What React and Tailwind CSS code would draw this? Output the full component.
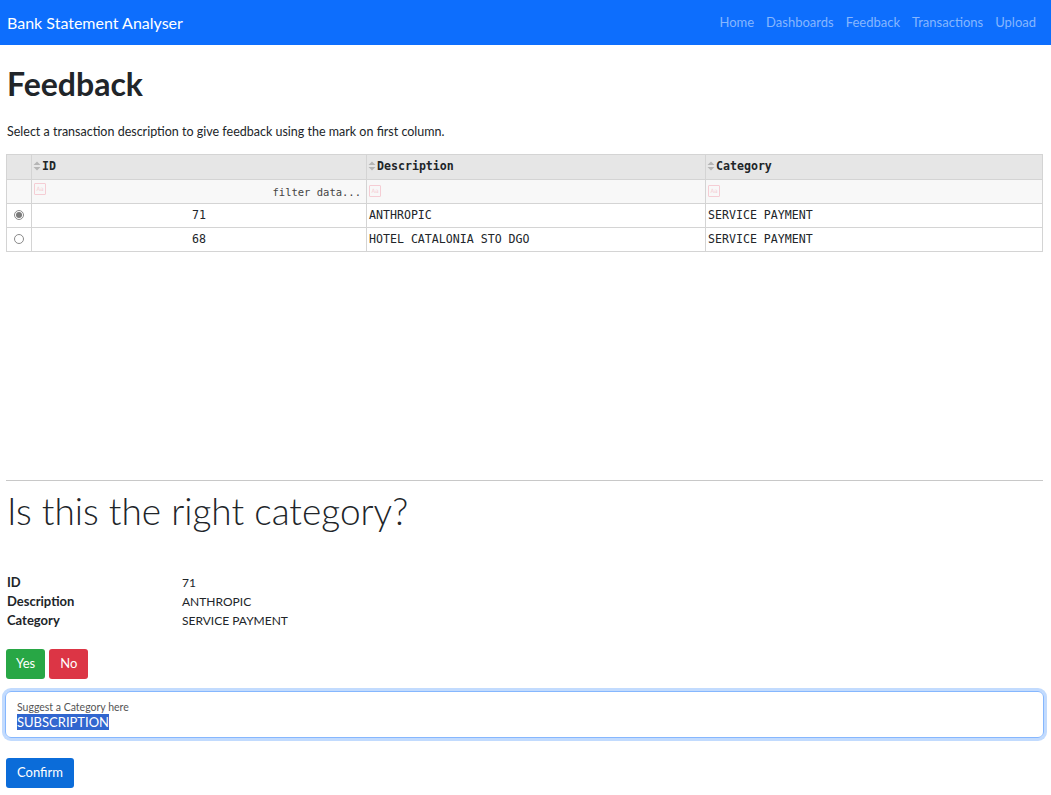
import React, { useState } from "react";

const rows = [
    { id: 71, description: "ANTHROPIC", category: "SERVICE PAYMENT" },
    { id: 68, description: "HOTEL CATALONIA STO DGO", category: "SERVICE PAYMENT" },
];

const SortIcon = () => (
    <svg width="8" height="10" viewBox="0 0 8 10" className="inline-block mr-[1px] -mt-[2px]">
        <path d="M4 0.5 L7.5 4 L0.5 4 Z" fill="#b5b5b5" />
        <path d="M4 9.5 L7.5 6 L0.5 6 Z" fill="#b5b5b5" />
    </svg>
);

const FilterIcon = () => (
    <span className="inline-flex items-center justify-center w-[12px] h-[12px] border border-[#f5cdd4] rounded-[1px] text-[6px] leading-none text-[#f5cdd4] align-middle">
        Aa
    </span>
);

const App = () => {
    const [selected, setSelected] = useState(71);
    const current = rows.find((r) => r.id === selected);
    const mono = { fontFamily: '"DejaVu Sans Mono", monospace' };

    return (
        <div className="min-h-screen bg-white text-[#212529]" style={{ fontFamily: 'Lato, "Noto Sans", sans-serif' }}>
            <nav className="h-[45px] bg-[#0d6efd] flex items-center justify-between pl-[7px] pr-[15px]">
                <span className="text-white text-[16px]">Bank Statement Analyser</span>
                <div className="flex gap-[12px] text-[13px] text-[#86b6fe] mt-[1px]">
                    <span>Home</span>
                    <span>Dashboards</span>
                    <span>Feedback</span>
                    <span>Transactions</span>
                    <span>Upload</span>
                </div>
            </nav>

            <div className="pl-[6px] pr-[8px]">
                <h1 className="text-[32px] font-bold leading-none mt-[23px] ml-[1px]">Feedback</h1>
                <p className="text-[12.5px] mt-[23px] ml-[1px]">
                    Select a transaction description to give feedback using the mark on first column.
                </p>

                <table className="w-full mt-[12px] border-collapse text-[11.6px]" style={mono}>
                    <colgroup>
                        <col className="w-[25px]" />
                        <col className="w-[335px]" />
                        <col className="w-[339px]" />
                        <col />
                    </colgroup>
                    <thead>
                        <tr className="h-[25px] bg-[#e6e6e6]">
                            <th className="border border-[#d4d4d4]"></th>
                            <th className="border border-[#d4d4d4] text-left font-bold px-[1px]"><SortIcon />ID</th>
                            <th className="border border-[#d4d4d4] text-left font-bold px-[1px]"><SortIcon />Description</th>
                            <th className="border border-[#d4d4d4] text-left font-bold px-[1px]"><SortIcon />Category</th>
                        </tr>
                        <tr className="h-[24px] bg-[#f8f8f8]">
                            <th className="border border-[#d4d4d4]"></th>
                            <th className="border border-[#d4d4d4] font-normal px-[2px] align-top pt-[3px]">
                                <div className="flex items-start justify-between">
                                    <FilterIcon />
                                    <span className="text-[10.5px] text-[#444] leading-[12px] mt-[3px] mr-[3px]">filter data...</span>
                                </div>
                            </th>
                            <th className="border border-[#d4d4d4] text-left font-normal px-[2px] align-top pt-[3px]"><FilterIcon /></th>
                            <th className="border border-[#d4d4d4] text-left font-normal px-[2px] align-top pt-[3px]"><FilterIcon /></th>
                        </tr>
                    </thead>
                    <tbody>
                        {rows.map((r) => (
                            <tr key={r.id} className="h-[24px] cursor-pointer" onClick={() => setSelected(r.id)}>
                                <td className="border border-[#d4d4d4] text-center">
                                    <span className="inline-flex items-center justify-center w-[10px] h-[10px] rounded-full border border-[#8a8a8a] bg-white align-middle">
                                        {selected === r.id && <span className="w-[6px] h-[6px] rounded-full bg-[#7a7a7a]" />}
                                    </span>
                                </td>
                                <td className="border border-[#d4d4d4] text-center">{r.id}</td>
                                <td className="border border-[#d4d4d4] px-[2px]">{r.description}</td>
                                <td className="border border-[#d4d4d4] px-[2px]">{r.category}</td>
                            </tr>
                        ))}
                    </tbody>
                </table>

                <div className="h-[228px]" />
                <hr className="border-0 border-t border-[#c8c8c8]" />

                <h2 className="text-[37px] font-light leading-tight mt-[7px] ml-[1px]">Is this the right category?</h2>

                <div className="mt-[39px] leading-[19px] ml-[1px]">
                    <div className="flex"><span className="w-[175px] font-bold text-[13px]">ID</span><span className="text-[12px]">{current.id}</span></div>
                    <div className="flex"><span className="w-[175px] font-bold text-[13px]">Description</span><span className="text-[12px]">{current.description}</span></div>
                    <div className="flex"><span className="w-[175px] font-bold text-[13px]">Category</span><span className="text-[12px]">{current.category}</span></div>
                </div>

                <div className="flex gap-[4px] mt-[19px]">
                    <button className="h-[30px] px-[10px] rounded-[3px] bg-[#28a745] text-white text-[13px]">Yes</button>
                    <button className="h-[30px] px-[11px] rounded-[3px] bg-[#dc3545] text-white text-[13px]">No</button>
                </div>

                <div className="mt-[12px] -ml-[1px] -mr-[1px] rounded-[6px] border border-[#86b7fe] ring-[3px] ring-[#c2dbfe] h-[47px] px-[11px] pt-[8px]">
                    <div className="text-[10.5px] text-[#555] leading-[14px]">Suggest a Category here</div>
                    <div className="text-[13px] leading-[16px]">
                        <span className="bg-[#3166cf] text-white">SUBSCRIPTION</span>
                    </div>
                </div>

                <button className="mt-[20px] h-[30px] px-[11px] rounded-[3px] bg-[#0b6cd9] text-white text-[13px]">Confirm</button>
            </div>
        </div>
    );
};

export default App;
